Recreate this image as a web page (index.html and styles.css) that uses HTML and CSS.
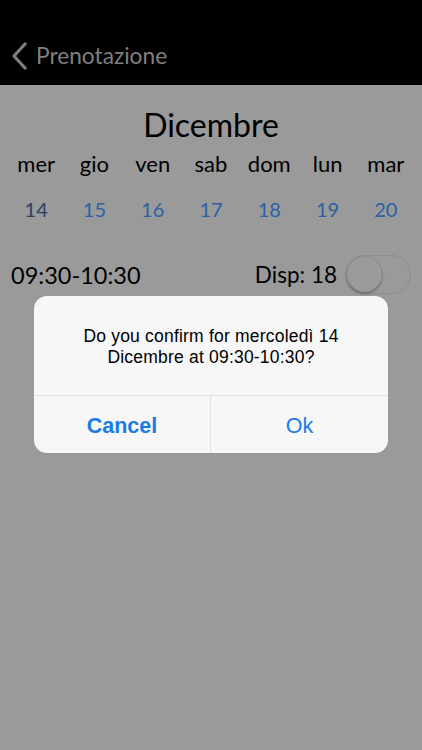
FILE: index.html
```html
<!DOCTYPE html>
<html lang="it">
<head>
<meta charset="utf-8">
<title>Prenotazione</title>
<link rel="stylesheet" href="styles.css">
</head>
<body>
<div class="screen">
  <header class="navbar">
    <a class="back">
      <svg class="chevron" width="16" height="28" viewBox="0 0 16 28"><path d="M14 2 L3 14 L14 26" fill="none" stroke="#7f7f7f" stroke-width="3.2" stroke-linecap="round" stroke-linejoin="round"/></svg>
      <span class="back-label">Prenotazione</span>
    </a>
  </header>
  <main class="content">
    <h1 class="month">Dicembre</h1>
    <div class="week">
      <div class="day"><span class="dname">mer</span><span class="dnum current">14</span></div>
      <div class="day"><span class="dname">gio</span><span class="dnum">15</span></div>
      <div class="day"><span class="dname">ven</span><span class="dnum">16</span></div>
      <div class="day"><span class="dname">sab</span><span class="dnum">17</span></div>
      <div class="day"><span class="dname">dom</span><span class="dnum">18</span></div>
      <div class="day"><span class="dname">lun</span><span class="dnum">19</span></div>
      <div class="day"><span class="dname">mar</span><span class="dnum">20</span></div>
    </div>
    <div class="slot">
      <span class="slot-time">09:30-10:30</span>
      <span class="slot-disp">Disp: 18</span>
      <span class="switch"><span class="knob"></span></span>
    </div>
  </main>
  <div class="overlay">
    <div class="alert">
      <p class="alert-msg">Do you confirm for mercoledì 14<br>Dicembre at 09:30-10:30?</p>
      <div class="alert-actions">
        <button class="alert-btn cancel">Cancel</button>
        <button class="alert-btn ok">Ok</button>
      </div>
    </div>
  </div>
</div>
</body>
</html>
```
FILE: styles.css
```css
html, body {
  margin: 0;
  padding: 0;
  background: #9a9a9a;
}
.screen {
  position: relative;
  width: 422px;
  height: 750px;
  overflow: hidden;
  background: #9a9a9a;
  font-family: Lato, "Liberation Sans", sans-serif;
  color: #000;
}
.navbar {
  height: 85px;
  background: #000;
  display: flex;
  align-items: flex-end;
  box-sizing: border-box;
  padding: 0 0 15px 11px;
}
.back {
  display: flex;
  align-items: center;
  gap: 9px;
  color: #7f7f7f;
}
.chevron {
  display: block;
}
.back-label {
  font-size: 22.7px;
  line-height: 28px;
  color: #7f7f7f;
}
.content {
  padding: 0 7px;
}
.month {
  margin: 0;
  padding-top: 21px;
  font-size: 32px;
  font-weight: 400;
  line-height: 38px;
  text-align: center;
}
.week {
  display: grid;
  grid-template-columns: repeat(7, 1fr);
  margin-top: 7px;
}
.day {
  display: flex;
  flex-direction: column;
  align-items: center;
}
.dname {
  font-size: 22px;
  line-height: 26px;
}
.dnum {
  margin-top: 20px;
  font-size: 20px;
  line-height: 24px;
  color: #2b61a6;
}
.dnum.current {
  color: #2e3f5f;
}
.slot {
  display: flex;
  align-items: center;
  margin-top: 34px;
  padding: 0 4px;
}
.slot-time {
  font-size: 23.5px;
  line-height: 30px;
  flex: 1;
}
.slot-disp {
  font-size: 22.5px;
  line-height: 30px;
  margin-right: 8px;
}
.switch {
  width: 66px;
  height: 39px;
  box-sizing: border-box;
  border: 1.5px solid #8c8c8c;
  border-radius: 20px;
  display: flex;
  align-items: center;
  padding: 0 1px;
}
.knob {
  width: 35px;
  height: 35px;
  border-radius: 50%;
  background: #9b9b9b;
  box-shadow: 0 2px 3px rgba(0, 0, 0, 0.25), 0 0 0 0.5px rgba(0, 0, 0, 0.12);
}
.overlay {
  position: absolute;
  inset: 0;
  display: flex;
  justify-content: center;
  align-items: flex-start;
  padding-top: 296px;
  box-sizing: border-box;
}
.alert {
  width: 354px;
  background: #f7f7f7;
  border-radius: 13px;
  overflow: hidden;
}
.alert-msg {
  margin: 0;
  height: 100px;
  box-sizing: border-box;
  border-bottom: 1px solid #e2e2e4;
  padding-top: 30px;
  text-align: center;
  font-family: "Liberation Sans", Arial, sans-serif;
  font-size: 17.5px;
  letter-spacing: 0.2px;
  line-height: 21px;
  color: #000;
}
.alert-actions {
  display: grid;
  grid-template-columns: 1fr 1fr;
  height: 57px;
}
.alert-btn {
  border: 0;
  margin: 0;
  background: transparent;
  font-family: "Liberation Sans", Arial, sans-serif;
  font-size: 21.5px;
  color: #1a7de4;
  padding: 3px 0 0 0;
}
.alert-btn.cancel {
  font-weight: 700;
  border-right: 1px solid #e2e2e4;
}
```
